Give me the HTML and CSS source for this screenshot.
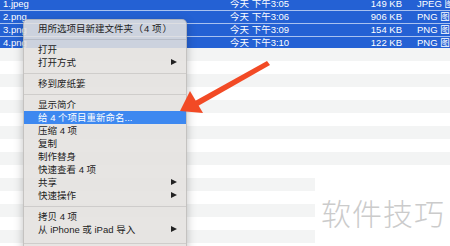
FILE: index.html
```html
<!DOCTYPE html>
<html lang="zh-CN">
  <head>
    <meta charset="UTF-8" />
    <meta name="viewport" content="width=device-width, initial-scale=1.0" />
    <title>Finder 右键菜单</title>
    <link rel="stylesheet" href="styles.css">
  </head>
  <body>
    <div class="files">
      <div class="file">
        <span>1.jpeg</span><span>今天 下午3:05</span><span class="size">149 KB</span><span class="kind">JPEG 图像</span>
      </div>
      <div class="file">
        <span>2.png</span><span>今天 下午3:06</span><span class="size">906 KB</span><span class="kind">PNG 图像</span>
      </div>
      <div class="file">
        <span>3.png</span><span>今天 下午3:09</span><span class="size">154 KB</span><span class="kind">PNG 图像</span>
      </div>
      <div class="file">
        <span>4.png</span><span>今天 下午3:10</span><span class="size">122 KB</span><span class="kind">PNG 图像</span>
      </div>
      <div class="empty"></div>
    </div>

    <ul class="menu">
      <li>用所选项目新建文件夹<span class="open">（</span>4 项<span class="close">）</span></li>
      <li class="sep"></li>
      <li>打开</li>
      <li class="sub">打开方式</li>
      <li class="sep"></li>
      <li>移到废纸篓</li>
      <li class="sep"></li>
      <li>显示简介</li>
      <li class="active">给 4 个项目重新命名...</li>
      <li>压缩 4 项</li>
      <li>复制</li>
      <li>制作替身</li>
      <li>快速查看 4 项</li>
      <li class="sub">共享</li>
      <li class="sub">快速操作</li>
      <li class="sep"></li>
      <li>拷贝 4 项</li>
      <li class="sub">从 iPhone 或 iPad 导入</li>
      <li class="sep last"></li>
      <li>使用群组</li>
    </ul>

    <svg class="arrow" width="450" height="246" viewBox="0 0 450 246">
      <polygon points="267,61 270,65 198,106 195,101" fill="#f24a25" />
      <polygon points="180,111 190,91 203,113" fill="#f24a25" />
    </svg>

    <div class="watermark">软件技巧</div>
  </body>
</html>
```

FILE: styles.css
```css
body {
  margin: 0;
  width: 450px;
  height: 246px;
  overflow: hidden;
  background: #ffffff;
  font-family: "Liberation Sans", "Noto Sans CJK SC", sans-serif;
  font-size: 9.5px;
}
.files {
  margin-top: -2px;
}
.file {
  display: grid;
  grid-template-columns: 230px 120px 52px 1fr;
  height: 12px;
  line-height: 12px;
  background: #2461d4;
  color: #ffffff;
  border-bottom: 1px solid #a9c2f0;
  white-space: nowrap;
  overflow: hidden;
}
.file:nth-child(4) {
  border-bottom: none;
  height: 11px;
}
.file span:first-child {
  padding-left: 3px;
}
.size {
  text-align: right;
}
.kind {
  padding-left: 15px;
}
.empty {
  height: 220px;
  background: repeating-linear-gradient(#f3f4f4 0 13px, #ffffff 13px 26px);
}
.menu {
  position: absolute;
  left: 23px;
  top: 19px;
  width: 162px;
  margin: 0;
  padding: 2px 0 0;
  list-style: none;
  background: rgba(228, 225, 223, 0.88);
  border: 0.5px solid rgba(0, 0, 0, 0.15);
  border-radius: 5px;
  box-shadow: 0 3px 10px rgba(0, 0, 0, 0.25);
  color: #1d1d1d;
}
.menu li {
  position: relative;
  height: 13px;
  line-height: 13px;
  padding-left: 14px;
  white-space: nowrap;
}
.menu .open,
.menu .close {
  display: inline-block;
  width: 10px;
}
.menu .open {
  text-align: right;
  margin-right: 1px;
}
.menu .close {
  margin-left: 1px;
}
.menu li.sep {
  height: 1px;
  margin: 4px 0 3px;
  padding: 0;
  background: rgba(0, 0, 0, 0.1);
}
.menu li.sep.last {
  margin: 7px 0 3px;
}
.menu li.active {
  background: #3d88f0;
  color: #ffffff;
}
.menu li.sub::after {
  content: "";
  position: absolute;
  right: 9px;
  top: 3px;
  border-left: 6px solid #222222;
  border-top: 3.5px solid transparent;
  border-bottom: 3.5px solid transparent;
}
.arrow {
  position: absolute;
  left: 0;
  top: 0;
}
.watermark {
  position: absolute;
  left: 315px;
  top: 178px;
  right: 0;
  bottom: 0;
  padding: 16px 0 0 6px;
  background: #ffffff;
  color: #cbcbcb;
  font-family: "Noto Sans CJK SC", sans-serif;
  font-size: 30px;
  font-weight: 300;
  line-height: 36px;
  letter-spacing: 1px;
}
```
